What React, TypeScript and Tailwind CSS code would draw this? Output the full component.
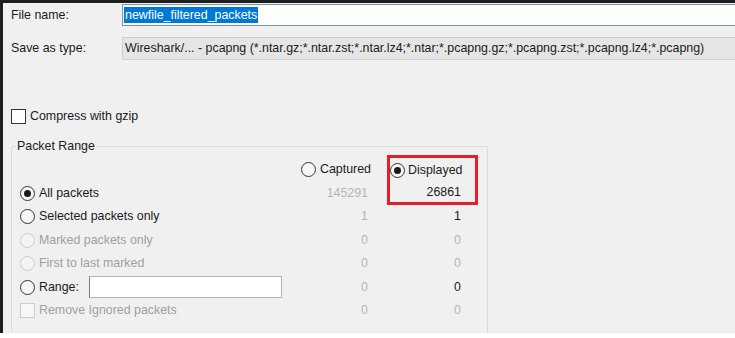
import React from 'react'

type Row = {
  label: string
  kind: 'radio' | 'check'
  checked?: boolean
  disabled?: boolean
  captured: string
  displayed: string
  displayedOn?: boolean
  range?: boolean
}

const rows: Row[] = [
  { label: 'Selected packets only', kind: 'radio', captured: '1', displayed: '1', displayedOn: true },
  { label: 'Marked packets only', kind: 'radio', disabled: true, captured: '0', displayed: '0' },
  { label: 'First to last marked', kind: 'radio', disabled: true, captured: '0', displayed: '0' },
  { label: 'Range:', kind: 'radio', captured: '0', displayed: '0', displayedOn: true, range: true },
  { label: 'Remove Ignored packets', kind: 'check', disabled: true, captured: '0', displayed: '0' },
]

function Radio({ checked, disabled }: { checked?: boolean; disabled?: boolean }) {
  return (
    <span
      className={`flex h-[15px] w-[15px] shrink-0 items-center justify-center rounded-full border ${
        disabled ? 'border-[#cccccc] bg-[#f3f3f3]' : 'border-[#333333] bg-[#f7f7f7]'
      }`}
    >
      {checked && <span className="h-[7px] w-[7px] rounded-full bg-[#1a1a1a]" />}
    </span>
  )
}

function Check({ disabled }: { disabled?: boolean }) {
  return (
    <span
      className={`h-[15px] w-[15px] shrink-0 border ${
        disabled ? 'border-[#cccccc] bg-[#f7f7f7]' : 'border-[#333333] bg-white'
      }`}
    />
  )
}

export default function App() {
  return (
    <div
      className="flex h-[338px] w-[735px] flex-col overflow-hidden bg-white text-[12.4px] text-[#1b1b1b]"
      style={{ fontFamily: '"Liberation Sans", Arial, sans-serif' }}
    >
      <div className="flex h-[333px] flex-col overflow-hidden border-l-[3px] border-t-[3px] border-[#1e1e1e] bg-[#f0f0f0]">
        {/* file name */}
        <div className="mt-[1px] flex h-[22px] items-center">
          <div className="w-[119px] pl-[8px]">File name:</div>
          <div className="flex h-[22px] flex-1 items-center border border-r-0 border-[#7396b9] bg-white pl-[1px]">
            <span className="bg-[#0078d7] px-[1px] leading-[16px] text-white">newfile_filtered_packets</span>
          </div>
        </div>

        {/* save as type */}
        <div className="mt-[11px] flex h-[23px] items-center">
          <div className="w-[119px] pl-[8px]">Save as type:</div>
          <div className="flex h-[23px] flex-1 items-center border border-r-0 border-[#cfcfcf] bg-[#e5e5e5] pl-[2px]">
            Wireshark/... - pcapng (*.ntar.gz;*.ntar.zst;*.ntar.lz4;*.ntar;*.pcapng.gz;*.pcapng.zst;*.pcapng.lz4;*.pcapng)
          </div>
        </div>

        {/* compress */}
        <div className="mt-[48px] flex h-[16px] items-center gap-[4px] pl-[8px]">
          <Check />
          <span>Compress with gzip</span>
        </div>

        {/* packet range */}
        <fieldset className="ml-[8px] mt-[15px] h-[220px] w-[477px] shrink-0 rounded-[2px] border border-[#dcdcdc]">
          <legend className="ml-[4px] px-[1px] leading-[14px]">Packet Range</legend>
          <div className="grid auto-rows-[23.5px] grid-cols-[286px_89px_91px] pt-[5px]">
            <div />
            <div className="flex items-center gap-[4px] pl-[3px]">
              <Radio />
              <span>Captured</span>
            </div>
            <div className="row-span-2 -mt-[3px] flex h-[50px] flex-col border-[3px] border-[#e3202a]">
              <div className="flex h-[24px] shrink-0 items-center gap-[3px]">
                <Radio checked />
                <span>Displayed</span>
              </div>
              <div className="flex h-[20px] shrink-0 items-center justify-end pr-[14px]">26861</div>
            </div>

            <div className="flex items-center gap-[4px] pl-[8px]">
              <Radio checked />
              <span>All packets</span>
            </div>
            <div className="flex items-center justify-end pr-[19px] text-[#b4b4b4]">145291</div>

            {rows.map((r) => (
              <React.Fragment key={r.label}>
                <div className="flex items-center gap-[4px] pl-[8px]">
                  {r.kind === 'radio' ? <Radio disabled={r.disabled} /> : <Check disabled={r.disabled} />}
                  <span className={r.disabled ? 'text-[#a0a0a0]' : ''}>{r.label}</span>
                  {r.range && (
                    <span className="ml-[6px] h-[22px] w-[193px] border border-[#b4b4b4] border-l-[#7a7a7a] bg-white" />
                  )}
                </div>
                <div className="flex items-center justify-end pr-[19px] text-[#b4b4b4]">{r.captured}</div>
                <div
                  className={`flex items-center justify-end pr-[17px] ${
                    r.displayedOn ? 'text-[#1b1b1b]' : 'text-[#b4b4b4]'
                  }`}
                >
                  {r.displayed}
                </div>
              </React.Fragment>
            ))}
          </div>
        </fieldset>
      </div>
    </div>
  )
}
